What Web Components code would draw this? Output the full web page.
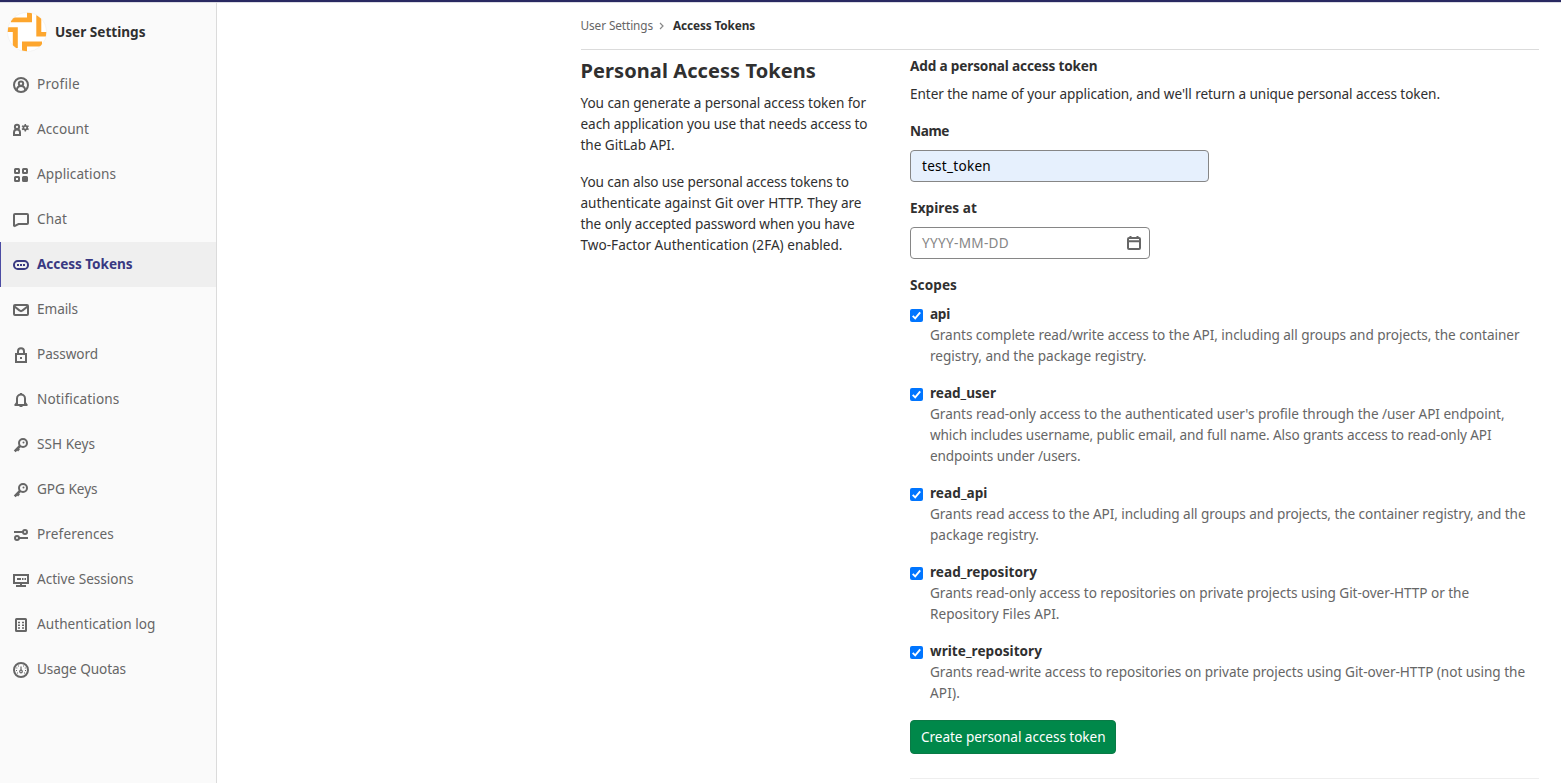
<!DOCTYPE html>
<html lang="en"><head><meta charset="utf-8"><title>Access Tokens</title>
<style>
html,body{margin:0;height:100%;overflow:hidden}
body{font:13.6px/21px "Noto Sans","Open Sans",sans-serif;color:#303030;background:#fff}
</style></head><body>
<settings-page></settings-page>
<script>
const ICONS={
profile:'<circle cx="8" cy="8" r="7"/><circle cx="8" cy="6.6" r="2.2"/><path d="M3.8 13.2c.3-2.6 1.8-4.2 4.2-4.2s3.900 1.600 4.200 4.200"/>',
account:'<circle cx="4" cy="4.900" r="2.100"/><path d="M1 13v-2.600C1 8.600 2 7.500 4 7.500s3 1.100 3 2.900V13z"/><circle cx="12.300" cy="5.700" r="1.900" stroke-width="1.700"/><path stroke-width="1.500" d="M12.300 2v1.600M12.300 7.800v1.600M9 3.900l1.500.8M14.100 6.600l1.500.9M9 7.500l1.500-.9M14.100 4.700l1.500-.8"/>',
applications:'<rect x="2" y="2" width="4" height="4" rx=".5"/><rect x="10" y="2" width="4" height="4" rx=".5"/><rect x="2" y="10" width="4" height="4" rx=".5"/><rect x="10" y="10" width="4" height="4" rx=".5" fill="currentColor"/>',
chat:'<path d="M1 14.500V3a1 1 0 0 1 1-1h12a1 1 0 0 1 1 1v8a1 1 0 0 1-1 1H5.500L1 14.300"/>',
token:'<rect x="1" y="4" width="14" height="8" rx="3.800"/><path stroke="none" fill="currentColor" d="M4 7h2v2H4zM7 7h2v2H7zM10 7h2v2h-2z"/>',
mail:'<rect x="1" y="3" width="14" height="10" rx="1"/><path d="M1.500 4.500 6.700 8.600a2 2 0 0 0 2.600 0l5.200-4.100"/>',
lock:'<rect x="3" y="7" width="10" height="8"/><path d="M5 7V4.200a3 3 0 0 1 6 0V7"/><path stroke="none" fill="currentColor" d="M7 10h2v2H7z"/>',
bell:'<path d="M4 12V6.500a4 4 0 0 1 8 0V12M1.500 13h13M7 2h2M6.500 14h3" /><path d="M4 10.500 2.500 12.700M12 10.500l1.500 2.200"/>',
key:'<circle cx="10" cy="6" r="4"/><path d="m7 9-5.300 5.300M4 11.500l2 2" stroke-width="2.600"/><circle cx="10.500" cy="5.500" r="1" stroke="none" fill="currentColor"/>',
prefs:'<circle cx="12" cy="5" r="2"/><circle cx="4" cy="11" r="2"/><path d="M1 5h9M6 11h9"/>',
monitor:'<path d="M1 3h14v8H1zM8 11v3M3 14h10"/><path d="M4 7h4M9 7h1.500M11.500 7H13" stroke-width="1.800"/>',
log:'<rect x="3" y="2" width="10" height="12" rx=".5"/><path d="M5 5.500h2M9 5.500h2M5 8.200h2M9 8.200h2M5 11h2M9 11h2" stroke-width="1.600"/>',
quota:'<circle cx="8" cy="8" r="7"/><circle cx="8" cy="9.500" r="1.300" stroke-width="1.200"/><path stroke-width="1.200" d="M8 8V4.500"/><path stroke="none" fill="currentColor" d="M5 3.500h1v1H5zM10 3.500h1v1h-1zM3.300 5.500h1v1h-1zM11.800 5.500h1v1h-1zM3 8h1v1H3zM12 8h1v1h-1zM4 10.500h1v1H4zM11 10.500h1v1h-1z"/>',
calendar:'<path d="M2 4a1 1 0 0 1 1-1h10a1 1 0 0 1 1 1v9a1 1 0 0 1-1 1H3a1 1 0 0 1-1-1zM2 6.300h12" /><path d="M4.500 1v3M11.500 1v3"/>'
};
const define=(name,html,init)=>customElements.define(name,class extends HTMLElement{
 connectedCallback(){ if(this.shadowRoot)return;
  this.attachShadow({mode:'open'}).innerHTML=typeof html==='function'?html(this):html;
  if(init)init(this);
 }
});
/* A single line of text tracked to a given measure */
define('text-line','<style>:host{display:block;white-space:nowrap}span{display:inline-block}</style><span><slot></slot></span>',el=>{
 const s=el.shadowRoot.querySelector('span'),w=+el.getAttribute('w'),n=el.textContent.length;
 const natural=s.getBoundingClientRect().width;
 if(w&&natural)s.style.letterSpacing=((w-natural)/n)+'px';
});
define('ui-icon',el=>`<style>:host{display:block;width:16px;height:16px}svg{display:block}</style>
<svg width="16" height="16" viewBox="0 0 16 16" fill="none" stroke="currentColor" stroke-width="2">${ICONS[el.getAttribute('name')]}</svg>`);
define('user-avatar',`<style>:host{display:block;width:40px;height:40px}svg{display:block}</style>
<svg width="40" height="40" viewBox="0 0 40 40"><defs><clipPath id="c"><circle cx="20" cy="20" r="19.300"/></clipPath></defs>
<circle cx="20" cy="20" r="19.500" fill="#fff" stroke="#eee" stroke-width=".6"/>
<g clip-path="url(#c)" fill="#fda62e"><path d="M4 5.500h16V0h5v10.200H4zM29.300 0h5v20H40v4.500H29.300zM35 29.500v5H20V40h-5V29.500zM0 15.300h10.800V36h-5V20H0z"/></g></svg>`);
define('nav-item',el=>`<style>
:host{display:flex;box-sizing:border-box;height:45px;padding-left:13px;align-items:flex-start;gap:8px;color:#666}
:host([active]){background:#efefef;color:#393982;font-weight:700;box-shadow:inset 1px 0 #4b4ba3}
ui-icon{margin-top:15px}text-line{margin-top:11px}</style>
<ui-icon name="${el.getAttribute('icon')}"></ui-icon><text-line w="${el.getAttribute('w')}">${el.getAttribute('label')}</text-line>`);
const NAV=[['profile','Profile',43],['account','Account',52],['applications','Applications',79],['chat','Chat',30],['token','Access Tokens',95.500,1],['mail','Emails',41],['lock','Password',61],['bell','Notifications',82.500],['key','SSH Keys',58],['key','GPG Keys',60.500],['prefs','Preferences',77],['monitor','Active Sessions',96.500],['log','Authentication log',118.500],['quota','Usage Quotas',89]];
define('side-bar',`<style>
:host{display:block;box-sizing:border-box;width:217px;background:#fafafa;border-right:1px solid #dbdbdb}
header{display:flex;height:60px;align-items:center;padding-left:7px;gap:8px;font-weight:700;box-sizing:border-box}
header text-line{margin-top:-2px}
</style><header><user-avatar></user-avatar><text-line w="90.500">User Settings</text-line></header>
<nav>${NAV.map(n=>`<nav-item icon="${n[0]}" label="${n[1]}" w="${n[2]}" ${n[3]?'active':''}></nav-item>`).join('')}</nav>`);
define('crumb-bar',`<style>
:host{display:flex;height:47px;align-items:center;border-bottom:1px solid #dbdbdb;font-size:11.800px;color:#666;gap:8px}
svg{margin:1px 0 0 -2px}.b{color:#303030;font-weight:700}</style>
<text-line w="72.500">User Settings</text-line><svg width="6" height="8" viewBox="0 0 6 8" fill="none" stroke="#888" stroke-width="1.200"><path d="m1 1 3 3-3 3"/></svg><text-line class="b" w="82">Access Tokens</text-line>`);
define('page-intro',`<style>:host{display:block;width:289px}
h4{margin:10px 0;font-size:20px;line-height:22px}div{margin-bottom:16px}</style>
<h4><text-line w="235.500">Personal Access Tokens</text-line></h4>
<div><text-line w="285.500">You can generate a personal access token for</text-line><text-line w="287">each application you use that needs access to</text-line><text-line w="94">the GitLab API.</text-line></div>
<div><text-line w="268.500">You can also use personal access tokens to</text-line><text-line w="281">authenticate against Git over HTTP. They are</text-line><text-line w="274">the only accepted password when you have</text-line><text-line w="262">Two-Factor Authentication (2FA) enabled.</text-line></div>`);
define('form-field',el=>`<style>
:host{display:block;margin-bottom:15px}
.label{font-weight:700}
.box{box-sizing:border-box;display:flex;align-items:center;justify-content:space-between;height:32px;margin-top:9px;padding:0 7px 2px 11px;border:1px solid #868686;border-radius:4px;background:#fff;color:#868686}
:host([filled]) .box{background:#e6f0fd;color:#000}
ui-icon{color:#666;margin-top:1px}</style>
<text-line class="label" w="${el.getAttribute('lw')}">${el.getAttribute('label')}</text-line>
<div class="box" style="width:${el.getAttribute('width')}px"><text-line w="${el.getAttribute('vw')}">${el.getAttribute('value')}</text-line>${el.hasAttribute('icon')?'<ui-icon name="calendar"></ui-icon>':''}</div>`);
define('scope-option',el=>`<style>
:host{display:flex;gap:7px;margin-bottom:16px;color:#666}
svg{flex:none;margin-top:6px}
.t{font-weight:700;color:#303030}</style>
<svg width="13" height="13" viewBox="0 0 13 13"><rect width="13" height="13" rx="2" fill="#0075ff"/><path d="m2.700 6.800 2.500 2.500 5-6" fill="none" stroke="#fff" stroke-width="1.900"/></svg>
<div><text-line class="t" w="${el.getAttribute('w')}">${el.getAttribute('name')}</text-line><slot></slot></div>`);
define('primary-button',`<style>:host{display:flex;width:206px;height:34px;box-sizing:border-box;align-items:center;margin-top:17px;padding:0 0 1px 10px;border:1px solid #0a7a46;border-radius:4px;background:#00884a;color:#fff}</style><slot></slot>`);
define('token-form',`<style>
:host{display:block;width:629px}
.title{font-weight:700;margin-top:5px}.intro{margin:7px 0 16px}
.scopes{font-weight:700;margin-bottom:8px}
hr{margin:24px 0 0;border:0;border-top:1px solid #eee}</style>
<text-line class="title" w="187.500">Add a personal access token</text-line>
<text-line class="intro" w="530">Enter the name of your application, and we'll return a unique personal access token.</text-line>
<form-field label="Name" lw="39" width="299" value="test_token" vw="69" filled></form-field>
<form-field label="Expires at" lw="67" width="240" value="YYYY-MM-DD" vw="87" icon></form-field>
<text-line class="scopes" w="47">Scopes</text-line>
<scope-option name="api" w="20"><text-line w="589.500">Grants complete read/write access to the API, including all groups and projects, the container</text-line><text-line w="216.500">registry, and the package registry.</text-line></scope-option>
<scope-option name="read_user" w="66">
<text-line w="574.500">Grants read-only access to the authenticated user's profile through the /user API endpoint,</text-line><text-line w="561.500">which includes username, public email, and full name. Also grants access to read-only API</text-line><text-line w="150.500">endpoints under /users.</text-line></scope-option>
<scope-option name="read_api" w="57.500"><text-line w="595.500">Grants read access to the API, including all groups and projects, the container registry, and the</text-line><text-line w="109">package registry.</text-line></scope-option>
<scope-option name="read_repository" w="107"><text-line w="539">Grants read-only access to repositories on private projects using Git-over-HTTP or the</text-line><text-line w="129.500">Repository Files API.</text-line></scope-option>
<scope-option name="write_repository" w="112"><text-line w="595">Grants read-write access to repositories on private projects using Git-over-HTTP (not using the</text-line><text-line w="30">API).</text-line></scope-option>
<primary-button><text-line w="184.500">Create personal access token</text-line></primary-button><hr>`);
define('settings-page',`<style>
:host{display:grid;grid-template:2px 781px / 217px 1fr;height:783px}
.top{grid-column:1/3;background:#292961;}
side-bar,main{box-shadow:inset 0 1px #dcdce4}
main{padding:0 22px 0 363.500px;}
.cols{display:flex;justify-content:space-between}
</style><div class="top"></div><side-bar></side-bar><main><crumb-bar></crumb-bar><div class="cols"><page-intro></page-intro><token-form></token-form></div></main>`);
</script></body></html>
